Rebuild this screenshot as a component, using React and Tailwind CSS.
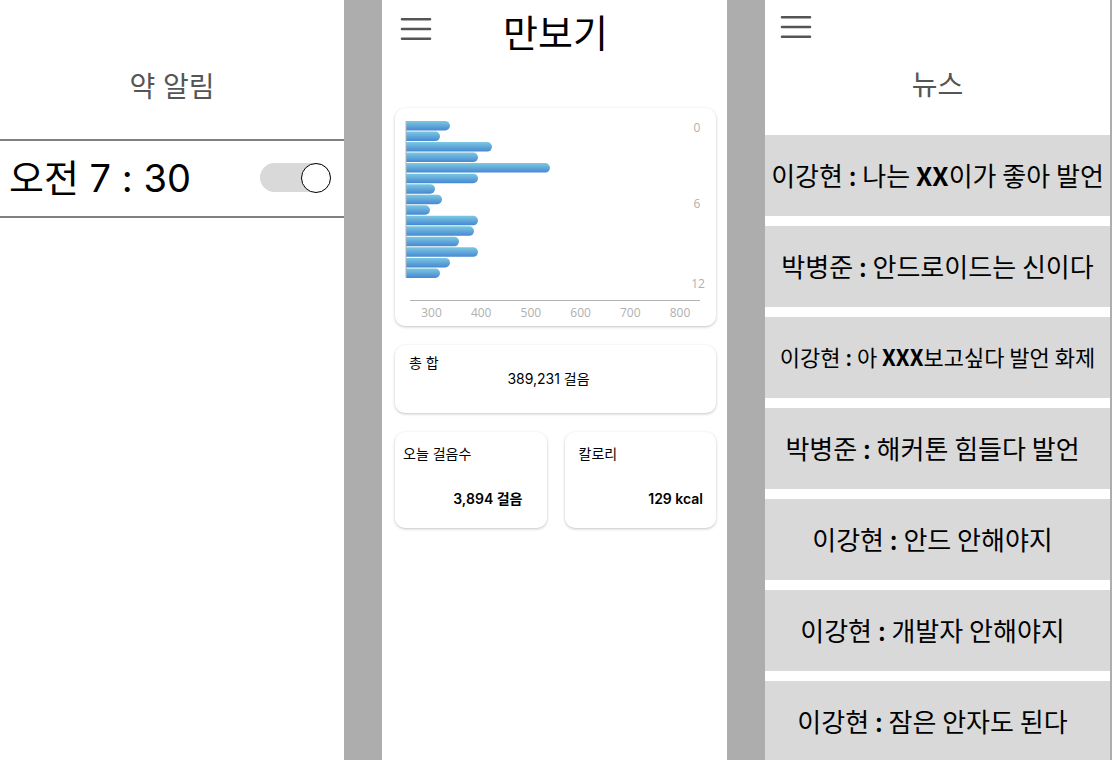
import React from "react";

const BARS = [44, 34, 86, 72, 144, 72, 29, 36, 24, 72, 68, 53, 72, 44, 34];
const STEPS = [300, 400, 500, 600, 700, 800];

const NEWS = [
  { author: "이강현", parts: ["나는 ", "XX", "이가 좋아 발언"] },
  { author: "박병준", parts: ["안드로이드는 신이다"] },
  { author: "이강현", parts: ["아 ", "XXX", "보고싶다 발언 화제"], small: true },
  { author: "박병준", parts: ["해커톤 힘들다 발언"], inset: true },
  { author: "이강현", parts: ["안드 안해야지"], inset: true },
  { author: "이강현", parts: ["개발자 안해야지"], inset: true },
  { author: "이강현", parts: ["잠은 안자도 된다"], inset: true },
];

function MenuButton() {
  return (
    <button type="button" aria-label="메뉴" className="block cursor-pointer">
      <svg width="32" height="24" viewBox="0 0 32 24" fill="none" stroke="#555555" strokeWidth="2.6" strokeLinecap="round">
        <path d="M2 2.3H30M2 12H30M2 21.7H30" />
      </svg>
    </button>
  );
}

function barPath(width, index) {
  const y = 13 + index * 10.53;
  const end = 11 + width;
  return `M11 ${y}H${end - 4.75}a4.75 4.75 0 0 1 0 9.5H11Z`;
}

function StepChart() {
  return (
    <svg viewBox="0 0 321 218" className="block w-full" role="img" aria-label="걸음 수 그래프">
      <defs>
        <linearGradient id="bar" x1="0" y1="0" x2="0" y2="1">
          <stop offset="0" stopColor="#7cc8e2" />
          <stop offset="1" stopColor="#4688d2" />
        </linearGradient>
      </defs>
      {BARS.map((width, i) => (
        <path key={i} d={barPath(width, i)} fill="url(#bar)" />
      ))}
      <path d="M11 13V170" stroke="#b3b3b3" />
      <path d="M15 192.5H305" stroke="#b3b3b3" />
      <g fill="#b0b0b0" fontFamily="'Open Sans', sans-serif" fontSize="12" textAnchor="middle">
        <text x="302" y="24">0</text>
        <text x="302" y="100">6</text>
        <text x="303" y="180">12</text>
        {STEPS.map((value, i) => (
          <text key={value} x={36.5 + i * 49.7} y="209">{value}</text>
        ))}
      </g>
    </svg>
  );
}

function Card({ className = "", children }) {
  return (
    <section className={`rounded-[10px] bg-white shadow-[0_1px_3px_rgba(0,0,0,0.24)] ${className}`}>
      {children}
    </section>
  );
}

function AlarmPanel() {
  return (
    <section className="min-w-0 bg-white pt-[67px]">
      <h1 className="text-center text-[28px] leading-[40px] text-[#555555]">약 알림</h1>
      <label className="mt-8 flex h-[79px] items-center justify-between border-y-2 border-[#808080] pr-[13px] pb-[2px] pl-[9px] text-[38px] leading-[48px]">
        <span>오전 7 : 30</span>
        <input
          type="checkbox"
          role="switch"
          defaultChecked
          className="flex h-[29px] w-[71px] cursor-pointer appearance-none rounded-full bg-[#d9d9d9] before:block before:size-[30px] before:rounded-full before:border before:border-black before:bg-white checked:justify-end"
        />
      </label>
    </section>
  );
}

function StepsPanel() {
  return (
    <section className="min-w-0 bg-white pr-[11px] pl-[13px]">
      <header className="grid h-[108px] grid-cols-[1fr_auto_1fr] items-start px-[5px]">
        <div className="pt-[17px]">
          <MenuButton />
        </div>
        <h1 className="pt-[7px] text-[38px] leading-[52px]">만보기</h1>
      </header>
      <Card>
        <StepChart />
      </Card>
      <Card className="mt-[19px] h-[68px] pt-2 pr-7 pl-[14px] text-[14px] leading-[20px]">
        <h2>총 합</h2>
        <p className="-mt-1 text-center">389,231 걸음</p>
      </Card>
      <div className="mt-[19px] grid grid-cols-2 gap-[18px] text-[14px] leading-[20px]">
        <Card className="h-24 pt-3 pr-6 pl-2">
          <h2>오늘 걸음수</h2>
          <p className="mt-[25px] text-right font-semibold">3,894 걸음</p>
        </Card>
        <Card className="h-24 pt-3 pr-[13px] pl-[14px]">
          <h2>칼로리</h2>
          <p className="mt-[25px] text-right font-semibold">129 kcal</p>
        </Card>
      </div>
    </section>
  );
}

function NewsPanel() {
  return (
    <section className="h-screen min-w-0 overflow-y-auto bg-white [scrollbar-width:none]">
      <header className="h-[135px] pt-[15px]">
        <div className="pl-[15px]">
          <MenuButton />
        </div>
        <h1 className="mt-[26px] text-center text-[28px] leading-[40px] text-[#555555]">뉴스</h1>
      </header>
      <ul className="flex flex-col gap-[10px] font-['Noto_Sans_CJK_KR',sans-serif]">
        {NEWS.map(({ author, parts, small, inset }) => (
          <li
            key={author + parts.join("")}
            className={`flex h-[81px] shrink-0 items-center justify-center bg-[#d9d9d9] pb-[3px] whitespace-pre ${small ? "text-[22px]" : "text-[26px]"} ${inset ? "pr-[10px]" : ""}`}
          >
            <p>
              {author} <b className="font-medium">:</b> {parts[0]}
              {parts[1] && <b>{parts[1]}</b>}
              {parts[2]}
            </p>
          </li>
        ))}
      </ul>
    </section>
  );
}

export default function App() {
  return (
    <main className="grid min-h-screen grid-cols-[344fr_345fr_345fr] gap-x-[38px] bg-[#adadad] pr-[2px] font-['Inter','Noto_Sans_CJK_KR',sans-serif] text-black">
      <AlarmPanel />
      <StepsPanel />
      <NewsPanel />
    </main>
  );
}
